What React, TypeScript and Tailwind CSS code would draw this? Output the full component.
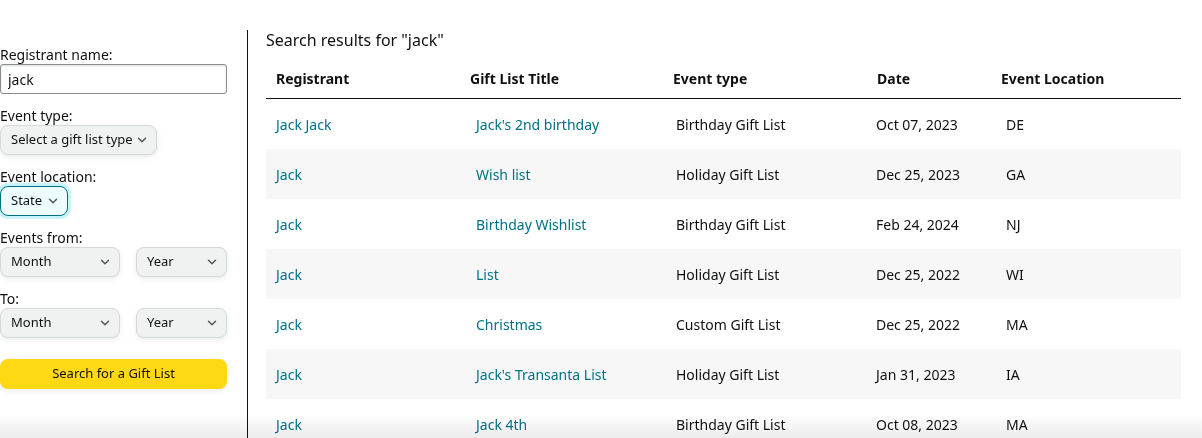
import { ChevronDown } from "lucide-react";

type Row = {
  registrant: string;
  title: string;
  type: string;
  date: string;
  location: string;
};

const rows: Row[] = [
  { registrant: "Jack Jack", title: "Jack's 2nd birthday", type: "Birthday Gift List", date: "Oct 07, 2023", location: "DE" },
  { registrant: "Jack", title: "Wish list", type: "Holiday Gift List", date: "Dec 25, 2023", location: "GA" },
  { registrant: "Jack", title: "Birthday Wishlist", type: "Birthday Gift List", date: "Feb 24, 2024", location: "NJ" },
  { registrant: "Jack", title: "List", type: "Holiday Gift List", date: "Dec 25, 2022", location: "WI" },
  { registrant: "Jack", title: "Christmas", type: "Custom Gift List", date: "Dec 25, 2022", location: "MA" },
  { registrant: "Jack", title: "Jack's Transanta List", type: "Holiday Gift List", date: "Jan 31, 2023", location: "IA" },
  { registrant: "Jack", title: "Jack 4th", type: "Birthday Gift List", date: "Oct 08, 2023", location: "MA" },
];

function Dropdown({
  label,
  className,
  focused,
}: {
  label: string;
  className: string;
  focused?: boolean;
}) {
  return (
    <button
      className={
        "flex h-[30px] items-center justify-between rounded-lg border pl-[10px] pr-[7px] text-[13px] text-[#0f1111] " +
        (focused
          ? "border-[#007185] bg-[#edfdff] shadow-[0_0_0_3px_#c8f3fa]"
          : "border-[#d5d9d9] bg-[#f0f2f2] shadow-[0_2px_5px_rgba(213,217,217,0.5)]") +
        " " +
        className
      }
    >
      <span>{label}</span>
      <ChevronDown className="h-[14px] w-[14px] text-[#555]" strokeWidth={2.5} />
    </button>
  );
}

function Label({ children }: { children: string }) {
  return <div className="h-[19px] text-[14px] leading-[19px] text-[#0f1111]">{children}</div>;
}

export default function App() {
  return (
    <div
      className="relative h-[438px] w-[1202px] overflow-hidden bg-white text-[#0f1111]"
      style={{ fontFamily: '"Noto Sans", Arial, sans-serif' }}
    >
      <div className="flex pt-[30px]">
        {/* sidebar */}
        <div className="h-[420px] w-[248px] shrink-0 border-r border-[#0f1111] pr-[20px] pt-[15px]">
          <div className="flex flex-col gap-[12px]">
            <div>
              <Label>Registrant name:</Label>
              <input
                readOnly
                value="jack"
                className="h-[30px] w-[227px] rounded-[3px] border border-[#888c8c] px-[7px] text-[14px] shadow-[inset_0_1px_2px_rgba(15,17,17,0.15)] outline-none"
              />
            </div>
            <div>
              <Label>Event type:</Label>
              <Dropdown label="Select a gift list type" className="w-[157px]" />
            </div>
            <div>
              <Label>Event location:</Label>
              <Dropdown label="State" className="w-[68px]" focused />
            </div>
            <div>
              <Label>Events from:</Label>
              <div className="flex gap-[16px]">
                <Dropdown label="Month" className="w-[120px]" />
                <Dropdown label="Year" className="w-[91px]" />
              </div>
            </div>
            <div>
              <Label>To:</Label>
              <div className="flex gap-[16px]">
                <Dropdown label="Month" className="w-[120px]" />
                <Dropdown label="Year" className="w-[91px]" />
              </div>
            </div>
          </div>
          <button className="mt-[21px] h-[30px] w-[227px] rounded-lg bg-[#ffd814] text-[13px] text-[#0f1111] shadow-[0_2px_5px_rgba(213,217,217,0.5)]">
            Search for a Gift List
          </button>
        </div>

        {/* results */}
        <div className="w-[933px] shrink-0 pl-[18px]">
          <h2 className="h-[20px] text-[16px] leading-[20px]">Search results for "jack"</h2>
          <div className="mt-[9px]">
            <div className="grid h-[40px] grid-cols-[194px_203px_204px_124px_1fr] items-center border-b border-[#0f1111] text-[14px] font-bold">
              <div className="pl-[10px]">Registrant</div>
              <div className="pl-[10px]">Gift List Title</div>
              <div className="pl-[10px]">Event type</div>
              <div className="pl-[10px]">Date</div>
              <div className="pl-[10px]">Event Location</div>
            </div>
            {rows.map((r, i) => (
              <div
                key={i}
                className={
                  "grid h-[50px] grid-cols-[194px_203px_204px_124px_1fr] items-center text-[14px] " +
                  (i % 2 === 1 ? "bg-[#f7f7f7]" : "bg-white")
                }
              >
                <div className="pl-[10px] text-[#007185]">{r.registrant}</div>
                <div className="pl-[16px] text-[#007185]">{r.title}</div>
                <div className="pl-[13px]">{r.type}</div>
                <div className="pl-[9px]">{r.date}</div>
                <div className="pl-[15px]">{r.location}</div>
              </div>
            ))}
          </div>
        </div>
      </div>
      <div className="pointer-events-none absolute bottom-0 left-0 right-0 h-[24px] bg-gradient-to-b from-white to-[#ececec] mix-blend-multiply" />
    </div>
  );
}
